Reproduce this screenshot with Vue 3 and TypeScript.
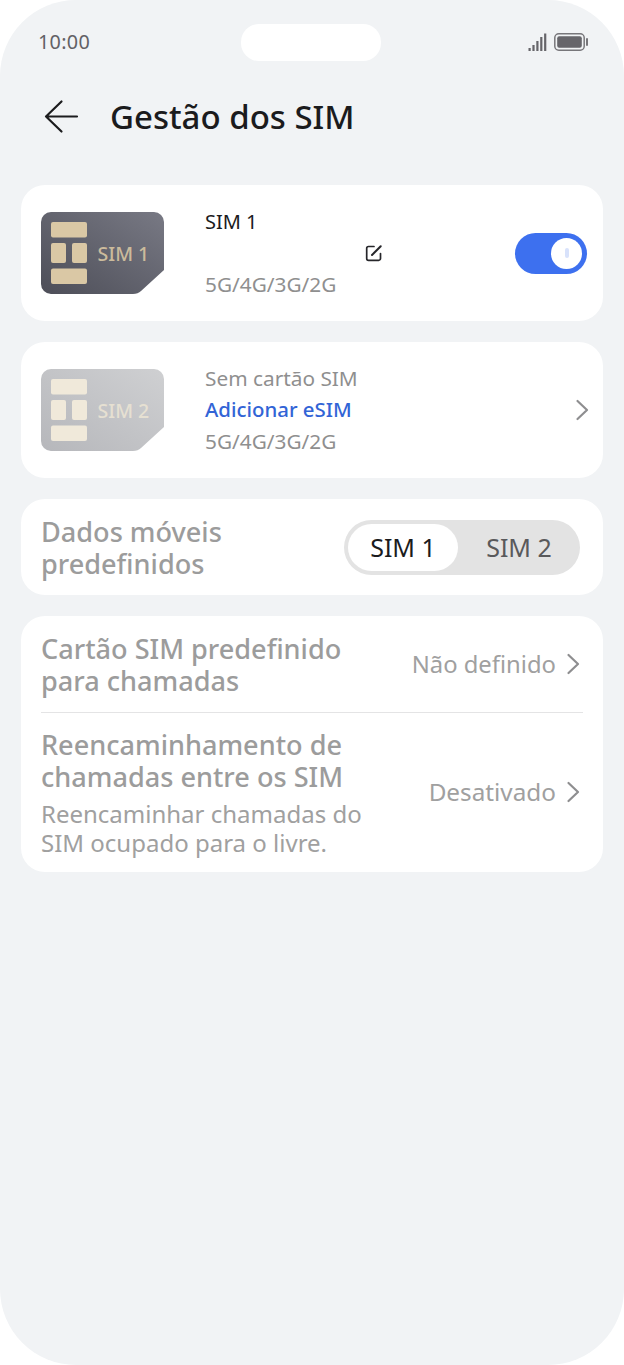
<script setup lang="ts">
// colours of the two chip drawings
const chip1 = { contact: '#dac8a5', label: '#cbbb9c' }
const chip2 = { contact: '#f0e9da', label: '#e6e0d2' }
</script>

<template>
  <div class="screen">
    <div class="status">
      <span class="clock">10:00</span>
      <div class="island"></div>
      <div class="status-icons">
        <svg width="20" height="18" viewBox="0 0 20 18">
          <rect x="0.5" y="15" width="2.200" height="3" fill="#66656a" />
          <rect x="4.400" y="12" width="2.200" height="6" fill="#66656a" />
          <rect x="8.300" y="8" width="2.200" height="10" fill="#66656a" />
          <rect x="12.200" y="4" width="2.200" height="14" fill="#66656a" />
          <rect x="16.100" y="0.500" width="2.200" height="17.500" fill="#66656a" />
        </svg>
        <svg width="35" height="20" viewBox="0 0 35 20">
          <rect x="0.800" y="1.800" width="29.400" height="16.400" rx="4" fill="none" stroke="#77767a" stroke-width="1.500" />
          <rect x="3.200" y="4.200" width="24.600" height="11.600" rx="2" fill="#66656a" />
          <rect x="32" y="6" width="2" height="8" rx="1" fill="#77767a" />
        </svg>
      </div>
    </div>

    <header class="title-bar">
      <svg class="back" width="36" height="36" viewBox="0 0 36 36">
        <path d="M18.500 2.500 3 17.500 18.500 32.500M3 17.500H34" fill="none" stroke="#1c1c1e" stroke-width="2.200" stroke-linecap="round" stroke-linejoin="round" />
      </svg>
      <h1>Gestão dos SIM</h1>
    </header>

    <section class="card sim-card">
      <svg class="sim" width="123" height="82" viewBox="0 0 123 82">
        <defs>
          <linearGradient id="plate1" x1="0" y1="1" x2="1" y2="0">
            <stop offset="0" stop-color="#4d4e58" />
            <stop offset="1" stop-color="#787984" />
          </linearGradient>
        </defs>
        <path d="M10 0H113A10 10 0 0 1 123 10V58L100 79Q97 82 92 82H10A10 10 0 0 1 0 72V10A10 10 0 0 1 10 0Z" fill="url(#plate1)" />
        <rect x="10" y="10" width="36" height="15.500" rx="2" :fill="chip1.contact" />
        <rect x="10" y="31" width="15" height="20" rx="2" :fill="chip1.contact" />
        <rect x="31" y="31" width="15" height="20" rx="2" :fill="chip1.contact" />
        <rect x="10" y="56.500" width="36" height="15.500" rx="2" :fill="chip1.contact" />
        <text x="56.500" y="49" class="sim-label" :fill="chip1.label">SIM 1</text>
      </svg>
      <div class="sim-lines">
        <div class="line name">SIM 1</div>
        <div class="line edit-line">
          <svg width="18" height="18" viewBox="0 0 18 18">
            <path d="M9 2.500H3.500A1.800 1.800 0 0 0 1.700 4.300V14.500A1.800 1.800 0 0 0 3.500 16.300H13.700A1.800 1.800 0 0 0 15.500 14.500V9.500" fill="none" stroke="#26262a" stroke-width="1.700" stroke-linecap="round" />
            <path d="M7 11 15.700 2.300" fill="none" stroke="#26262a" stroke-width="2" stroke-linecap="round" />
          </svg>
        </div>
        <div class="line sub">5G/4G/3G/2G</div>
      </div>
      <div class="toggle"><span class="knob"><i></i></span></div>
    </section>

    <section class="card sim-card">
      <svg class="sim" width="123" height="82" viewBox="0 0 123 82">
        <defs>
          <linearGradient id="plate2" x1="0" y1="1" x2="1" y2="0">
            <stop offset="0" stop-color="#b6b7bb" />
            <stop offset="1" stop-color="#cfd0d2" />
          </linearGradient>
        </defs>
        <path d="M10 0H113A10 10 0 0 1 123 10V58L100 79Q97 82 92 82H10A10 10 0 0 1 0 72V10A10 10 0 0 1 10 0Z" fill="url(#plate2)" />
        <rect x="10" y="10" width="36" height="15.500" rx="2" :fill="chip2.contact" />
        <rect x="10" y="31" width="15" height="20" rx="2" :fill="chip2.contact" />
        <rect x="31" y="31" width="15" height="20" rx="2" :fill="chip2.contact" />
        <rect x="10" y="56.500" width="36" height="15.500" rx="2" :fill="chip2.contact" />
        <text x="56.500" y="49" class="sim-label" :fill="chip2.label">SIM 2</text>
      </svg>
      <div class="sim-lines">
        <div class="line sub">Sem cartão SIM</div>
        <div class="line link">Adicionar eSIM</div>
        <div class="line sub">5G/4G/3G/2G</div>
      </div>
      <svg class="chevron sim-chevron" width="15" height="22" viewBox="0 0 15 22">
        <path d="M2.500 2 12 11 2.500 20" fill="none" stroke="#8e8e90" stroke-width="2.200" stroke-linecap="round" stroke-linejoin="round" />
      </svg>
    </section>

    <section class="card data-card">
      <div class="label">Dados móveis<br />predefinidos</div>
      <div class="segment">
        <span class="seg on">SIM 1</span>
        <span class="seg">SIM 2</span>
      </div>
    </section>

    <section class="card list-card">
      <div class="row row-first">
        <div class="label">Cartão SIM predefinido<br />para chamadas</div>
        <div class="value">
          Não definido
          <svg class="chevron" width="15" height="22" viewBox="0 0 15 22">
            <path d="M2.500 2 12 11 2.500 20" fill="none" stroke="#8e8e90" stroke-width="2.200" stroke-linecap="round" stroke-linejoin="round" />
          </svg>
        </div>
      </div>
      <div class="divider"></div>
      <div class="row row-second">
        <div>
          <div class="label">Reencaminhamento de<br />chamadas entre os SIM</div>
          <div class="hint">Reencaminhar chamadas do<br />SIM ocupado para o livre.</div>
        </div>
        <div class="value">
          Desativado
          <svg class="chevron" width="15" height="22" viewBox="0 0 15 22">
            <path d="M2.500 2 12 11 2.500 20" fill="none" stroke="#8e8e90" stroke-width="2.200" stroke-linecap="round" stroke-linejoin="round" />
          </svg>
        </div>
      </div>
    </section>
  </div>
</template>

<style>
html,
body {
  background: #fff;
}
</style>

<style scoped>
.screen {
  width: 624px;
  height: 1365px;
  box-sizing: border-box;
  padding: 24px 21px 0;
  background: #f1f3f5;
  border-radius: 76px;
  font-family: "Noto Sans", "Open Sans", sans-serif;
  overflow: hidden;
}

.status {
  height: 37px;
  display: flex;
  align-items: center;
  justify-content: space-between;
  padding: 0 17px;
  position: relative;
}

.clock {
  font-size: 19.800px;
  color: #626166;
  letter-spacing: 0.3px;
  padding-bottom: 2px;
}

.island {
  position: absolute;
  left: 220px;
  top: 0;
  width: 140px;
  height: 37px;
  border-radius: 18px;
  background: #fff;
}

.status-icons {
  display: flex;
  align-items: center;
  gap: 6px;
  margin-right: -3px;
  margin-bottom: 1px;
}

.title-bar {
  display: flex;
  align-items: center;
  margin-top: 37px;
  height: 38px;
  margin-bottom: 49px;
}

.back {
  margin-left: 22px;
  margin-right: 31px;
}

h1 {
  margin: 0;
  font-size: 33px;
  font-weight: 500;
  color: #1b1b1d;
  line-height: 38px;
}

.card {
  background: #fff;
  border-radius: 24px;
  margin-bottom: 21px;
}

.sim-card {
  height: 136px;
  box-sizing: border-box;
  padding: 0 16px 0 20px;
  display: flex;
  align-items: center;
}

.sim {
  flex: none;
  margin-right: 41px;
}

.sim-label {
  font-size: 19.500px;
  font-weight: 500;
}

.sim-lines {
  flex: 1;
}

.line {
  height: 31.500px;
  line-height: 31.500px;
  font-size: 20.800px;
}

.name {
  color: #1b1b1d;
  font-size: 20px;
}

.sub {
  color: #8f8f8f;
}

.link {
  color: #3264d6;
  font-size: 20.400px;
  font-weight: 500;
}

.edit-line {
  display: flex;
  align-items: center;
  padding-left: 160px;
}

.toggle {
  width: 72px;
  height: 41px;
  border-radius: 21px;
  background: #3d70ef;
  position: relative;
}

.knob {
  position: absolute;
  right: 5px;
  top: 5px;
  width: 31px;
  height: 31px;
  border-radius: 50%;
  background: #fff;
  display: flex;
  align-items: center;
  justify-content: center;
}

.knob i {
  width: 4px;
  height: 10px;
  border-radius: 2px;
  background: #d8e2fb;
}

.sim-chevron {
  margin-right: -3px;
}

.data-card {
  height: 96px;
  display: flex;
  align-items: center;
  justify-content: space-between;
  padding: 0 23px 0 20px;
}

.label {
  font-size: 27.100px;
  line-height: 32px;
  font-weight: 500;
  color: #9c9c9c;
  padding-top: 1px;
}

.segment {
  width: 236px;
  height: 55px;
  box-sizing: border-box;
  padding: 4px 0 4px 4px;
  border-radius: 28px;
  background: #e3e3e3;
  display: flex;
  align-items: center;
}

.seg {
  flex: 1;
  text-align: center;
  font-size: 25px;
  line-height: 47px;
  color: #59595b;
}

.on {
  flex: none;
  width: 110px;
  border-radius: 24px;
  background: #fff;
  color: #1b1b1d;
}

.list-card {
  padding: 0 20px;
}

.row {
  display: flex;
  align-items: center;
  justify-content: space-between;
}

.row-first {
  height: 96px;
}

.row-second {
  height: 159px;
}

.divider {
  height: 1px;
  background: #e4e4e5;
}

.value {
  display: flex;
  align-items: center;
  gap: 10px;
  font-size: 23.800px;
  color: #a0a0a0;
  margin-right: 2px;
}

.row-second .value {
  font-size: 24.300px;
  margin-bottom: 2px;
}

.hint {
  font-size: 24px;
  line-height: 29px;
  color: #a0a0a0;
  margin-top: 6px;
}
</style>
